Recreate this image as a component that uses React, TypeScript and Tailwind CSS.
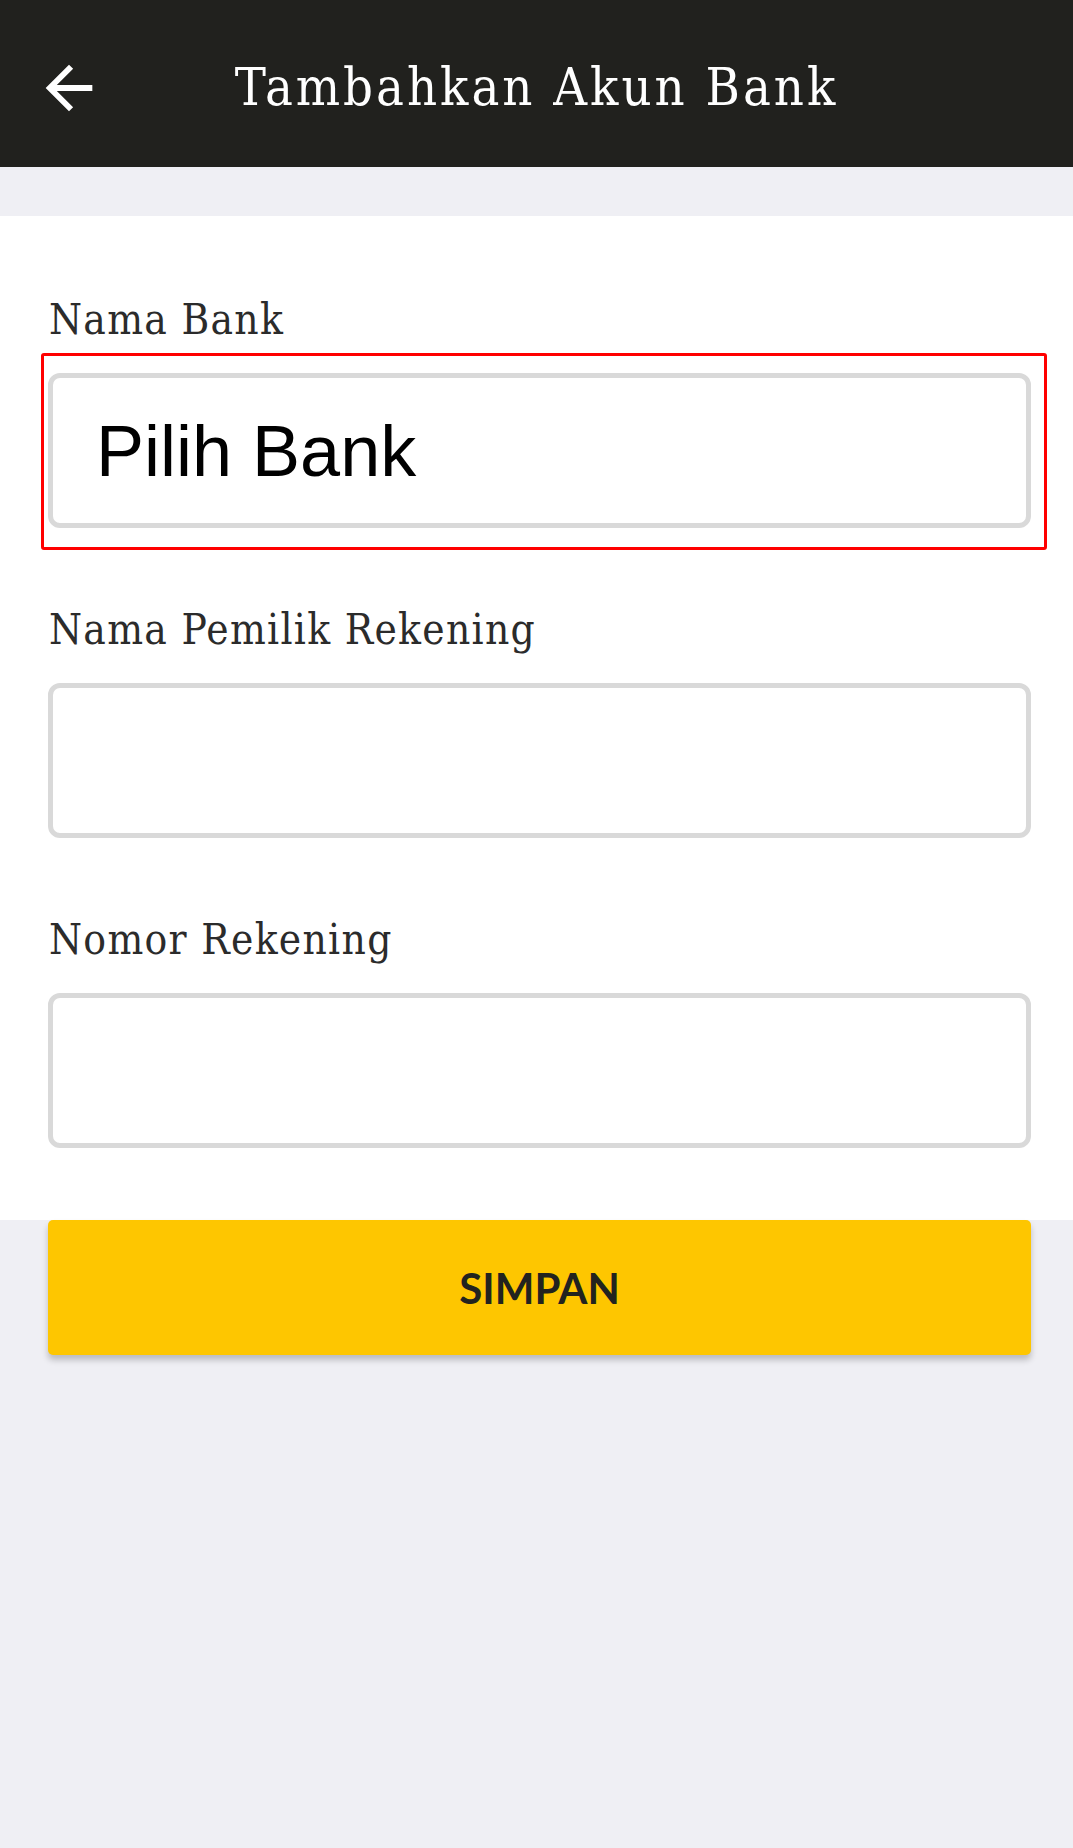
import React from "react";

const slab = { fontFamily: '"DejaVu Serif Condensed", "DejaVu Serif", serif', fontStretch: "condensed" } as React.CSSProperties;

function Field({ label, children, highlight }: { label: string; children?: React.ReactNode; highlight?: boolean }) {
  return (
    <div className="flex flex-col">
      <div className="text-[42px] leading-none text-[#2b2b2b] h-[43px] pl-[1px] tracking-[1.3px]" style={slab}>
        {label}
      </div>
      <div className="relative mt-[31px]">
        <div className="h-[155px] border-[5px] border-[#d9d9d9] rounded-[12px] bg-white flex items-center pl-[43px]">
          {children}
        </div>
        {highlight && (
          <div className="absolute -top-[20px] -left-[7px] -right-[16px] -bottom-[22px] border-[3px] border-[#ff0000] rounded-[3px] pointer-events-none" />
        )}
      </div>
    </div>
  );
}

export default function App() {
  return (
    <div className="w-[1073px] min-h-[1848px] bg-[#efeff4]">
      <header className="h-[167px] bg-[#21211e] grid grid-cols-[104px_1fr_104px] items-center">
        <div className="pl-[34px] pt-[8px] flex items-center">
          <svg width="70" height="70" viewBox="0 0 24 24" fill="white">
            <path d="M20 11H7.83l5.59-5.59L12 4l-8 8 8 8 1.41-1.41L7.83 13H20v-2z" />
          </svg>
        </div>
        <div className="text-center text-white text-[52px] leading-none pt-[6px] tracking-[3px]" style={slab}>
          Tambahkan Akun Bank
        </div>
        <div />
      </header>
      <div className="h-[49px]" />
      <section className="bg-white pt-[83px] pb-[72px] pl-[48px] pr-[42px] flex flex-col gap-[81px]">
        <Field label="Nama Bank" highlight>
          <span className="text-[72px] leading-none text-black" style={{ fontFamily: '"Liberation Sans", Arial, sans-serif' }}>
            Pilih Bank
          </span>
        </Field>
        <Field label="Nama Pemilik Rekening" />
        <Field label="Nomor Rekening" />
      </section>
      <div className="pl-[48px] pr-[42px]">
        <button className="w-full h-[135px] bg-[#fec600] rounded-[5px] shadow-[0_5px_6px_rgba(0,0,0,0.22)] flex items-center justify-center">
          <span className="text-[42px] font-bold text-[#22231f] leading-none" style={{ fontFamily: 'Lato, "Liberation Sans", sans-serif' }}>
            SIMPAN
          </span>
        </button>
      </div>
    </div>
  );
}
